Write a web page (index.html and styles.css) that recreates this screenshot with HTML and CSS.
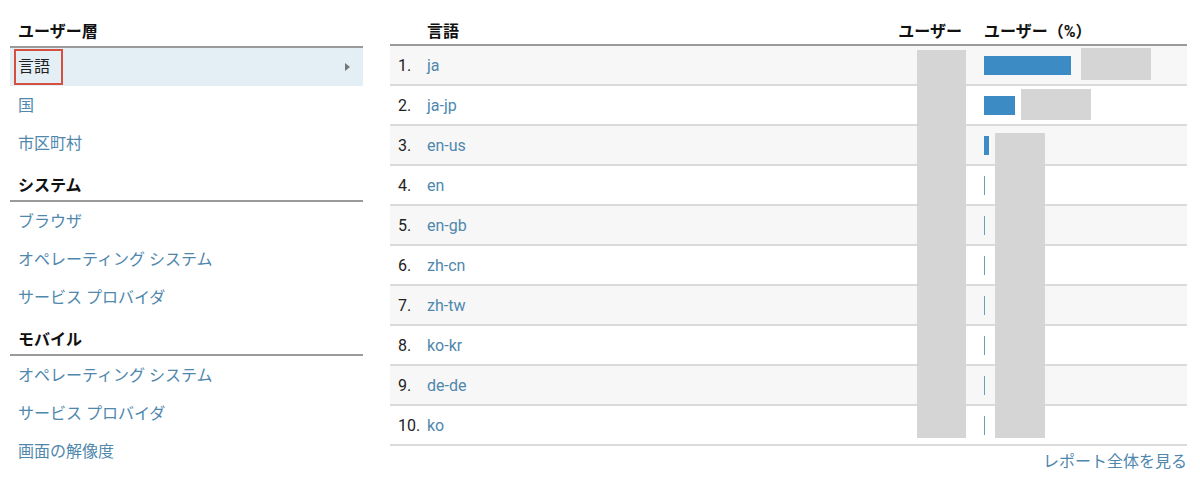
FILE: index.html
```html
<!DOCTYPE html>
<html lang="ja">
<head>
    <meta charset="UTF-8">
    <meta name="viewport" content="width=device-width, initial-scale=1.0">
    <title>言語 - ユーザー層</title>
    <link rel="stylesheet" href="styles.css">
</head>
<body>

    <div class="page">

        <!-- Left menu -->
        <div class="side-menu">
            <div class="menu-heading">ユーザー層</div>
            <div class="menu-item selected">
                <span class="marked">言語</span>
                <span class="arrow"></span>
            </div>
            <div class="menu-item"><a href="#">国</a></div>
            <div class="menu-item"><a href="#">市区町村</a></div>

            <div class="menu-heading">システム</div>
            <div class="menu-item"><a href="#">ブラウザ</a></div>
            <div class="menu-item"><a href="#">オペレーティング システム</a></div>
            <div class="menu-item"><a href="#">サービス プロバイダ</a></div>

            <div class="menu-heading">モバイル</div>
            <div class="menu-item"><a href="#">オペレーティング システム</a></div>
            <div class="menu-item"><a href="#">サービス プロバイダ</a></div>
            <div class="menu-item"><a href="#">画面の解像度</a></div>
        </div>

        <!-- Report table -->
        <div class="report">
            <div class="report-table">
                <div class="report-row head">
                    <div></div>
                    <div>言語</div>
                    <div class="num">ユーザー</div>
                    <div class="pct">ユーザー（%）</div>
                </div>
                <div class="report-row">
                    <div class="rank">1.</div>
                    <div><a href="#">ja</a></div>
                    <div class="num"></div>
                    <div class="pct"><span class="bar" style="width: 87px"></span></div>
                </div>
                <div class="report-row">
                    <div class="rank">2.</div>
                    <div><a href="#">ja-jp</a></div>
                    <div class="num"></div>
                    <div class="pct"><span class="bar" style="width: 31px"></span></div>
                </div>
                <div class="report-row">
                    <div class="rank">3.</div>
                    <div><a href="#">en-us</a></div>
                    <div class="num"></div>
                    <div class="pct"><span class="bar" style="width: 5px"></span></div>
                </div>
                <div class="report-row">
                    <div class="rank">4.</div>
                    <div><a href="#">en</a></div>
                    <div class="num"></div>
                    <div class="pct"><span class="bar thin"></span></div>
                </div>
                <div class="report-row">
                    <div class="rank">5.</div>
                    <div><a href="#">en-gb</a></div>
                    <div class="num"></div>
                    <div class="pct"><span class="bar thin"></span></div>
                </div>
                <div class="report-row">
                    <div class="rank">6.</div>
                    <div><a href="#">zh-cn</a></div>
                    <div class="num"></div>
                    <div class="pct"><span class="bar thin"></span></div>
                </div>
                <div class="report-row">
                    <div class="rank">7.</div>
                    <div><a href="#">zh-tw</a></div>
                    <div class="num"></div>
                    <div class="pct"><span class="bar thin"></span></div>
                </div>
                <div class="report-row">
                    <div class="rank">8.</div>
                    <div><a href="#">ko-kr</a></div>
                    <div class="num"></div>
                    <div class="pct"><span class="bar thin"></span></div>
                </div>
                <div class="report-row">
                    <div class="rank">9.</div>
                    <div><a href="#">de-de</a></div>
                    <div class="num"></div>
                    <div class="pct"><span class="bar thin"></span></div>
                </div>
                <div class="report-row">
                    <div class="rank">10.</div>
                    <div><a href="#">ko</a></div>
                    <div class="num"></div>
                    <div class="pct"><span class="bar thin"></span></div>
                </div>
            </div>

            <!-- Redacted values -->
            <div class="mask mask-users"></div>
            <div class="mask mask-pct"></div>
            <div class="mask mask-row1"></div>
            <div class="mask mask-row2"></div>

            <div class="report-footer">
                <a href="#">レポート全体を見る</a>
            </div>
        </div>

    </div>

</body>
</html>
```

FILE: styles.css
```css
body {
    margin: 0;
    padding: 0;
    background-color: #ffffff;
    color: #222;
    font-family: "Roboto", "Noto Sans CJK JP", sans-serif;
    font-size: 16px;
}

a {
    color: #4f87ad;
    text-decoration: none;
}

.page {
    display: flex;
    gap: 27px;
    padding: 8px 13px 0 10px;
}

/* Left menu */
.side-menu {
    width: 353px;
    flex: none;
}

.menu-heading {
    padding: 14px 0 4px 8px;
    line-height: 20px;
    font-weight: bold;
    color: #111;
    border-bottom: 2px solid #9a9a9a;
}

.menu-item {
    display: flex;
    align-items: center;
    justify-content: space-between;
    height: 38px;
    box-sizing: border-box;
    padding: 0 13px 2px 8px;
}

.menu-item.selected {
    background-color: #e4eef5;
    color: #222;
    padding-bottom: 0;
}

.menu-item .marked {
    margin-left: -4px;
    padding: 0 11px 0 2px;
    line-height: 32px;
    border: 2px solid #d5503f;
}

.menu-item .arrow {
    width: 0;
    height: 0;
    border-top: 4px solid transparent;
    border-bottom: 4px solid transparent;
    border-left: 5px solid #777;
}

/* Report table */
.report {
    flex: 1;
    position: relative;
}

.report-row {
    display: grid;
    grid-template-columns: 29px 1fr 120px 225px;
    align-items: center;
    height: 40px;
    box-sizing: border-box;
    border-bottom: 2px solid #dadada;
    padding-left: 8px;
}

.report-row:nth-child(even) {
    background-color: #f7f7f7;
}

.report-row.head {
    height: 38px;
    padding-top: 14px;
    padding-bottom: 4px;
    line-height: 20px;
    align-items: end;
    font-weight: bold;
    color: #111;
    border-bottom: 2px solid #9a9a9a;
    background-color: transparent;
}

.report-row .rank {
    color: #222;
}

.report-row .num {
    text-align: right;
}

.report-row .pct {
    padding-left: 22px;
    display: flex;
    align-items: center;
}

.bar {
    display: block;
    height: 19px;
    background-color: #3d8bc4;
}

.bar.thin {
    width: 1px;
    background-color: #6f9db8;
}

.mask {
    position: absolute;
    background-color: #d5d5d5;
}

.mask-users {
    left: 527px;
    top: 42px;
    width: 49px;
    height: 388px;
}

.mask-pct {
    left: 605px;
    top: 125px;
    width: 50px;
    height: 305px;
}

.mask-row1 {
    left: 691px;
    top: 40px;
    width: 70px;
    height: 32px;
}

.mask-row2 {
    left: 631px;
    top: 81px;
    width: 70px;
    height: 31px;
}

.report-footer {
    text-align: right;
    padding: 6px 0 0 0;
    line-height: 20px;
}
```
